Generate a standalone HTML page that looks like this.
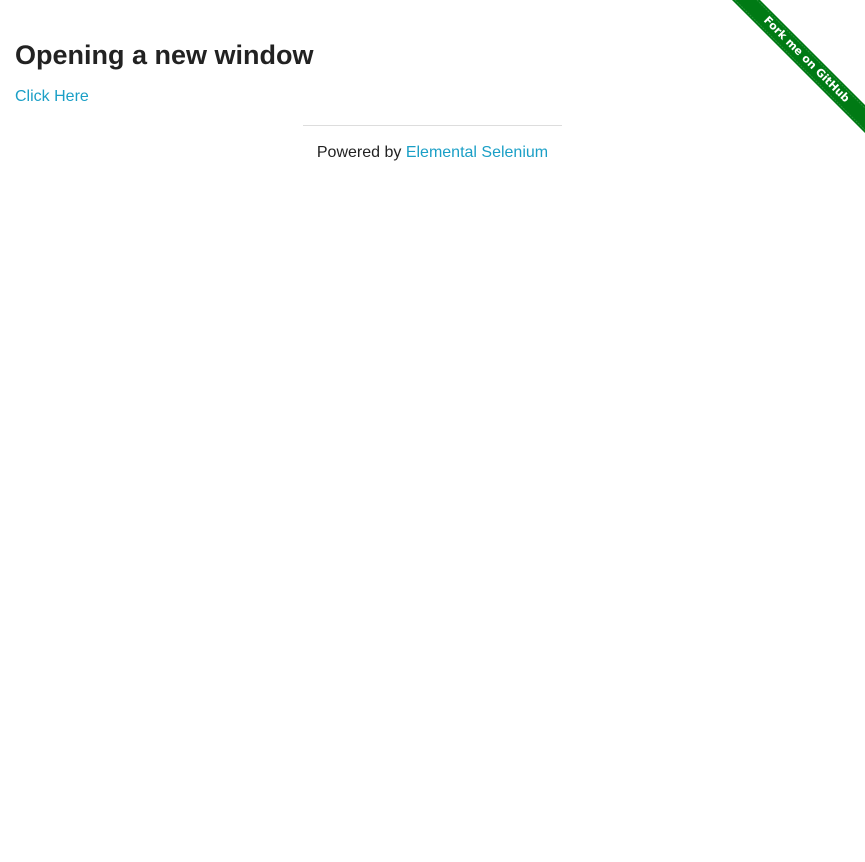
<!DOCTYPE html>
<html><head><meta charset="utf-8">
<style>
html,body{margin:0;padding:0;background:#fff;}
body{font-family:"Liberation Sans",Arial,sans-serif;color:#222;width:865px;height:862px;position:relative;overflow:hidden;}
h3{position:absolute;left:15px;top:38px;margin:0;font-size:27px;font-weight:bold;color:#222;line-height:34px;}
.link{position:absolute;left:15px;top:87px;font-size:16px;color:#1a9fc6;text-decoration:none;line-height:20px;}
hr{position:absolute;left:303px;top:125px;width:259px;margin:0;border:0;border-top:1px solid #ddd;}
.foot{position:absolute;left:0;width:865px;top:143px;text-align:center;font-size:16px;line-height:20px;}
.foot a{color:#1a9fc6;text-decoration:none;}
svg{position:absolute;left:0;top:0;}
</style></head><body>
<h3>Opening a new window</h3>
<a class="link" href="#">Click Here</a>
<hr>
<div class="foot">Powered by <a href="#">Elemental Selenium</a></div>
<svg width="865" height="862">
<polygon points="732,0 760,0 865,105 865,133" fill="#007a14"/>
<line x1="735" y1="0" x2="865" y2="130" stroke="#3a9a4a" stroke-width="1" stroke-dasharray="2,1" opacity="0.7"/>
<line x1="757" y1="0" x2="865" y2="108" stroke="#3a9a4a" stroke-width="1" stroke-dasharray="2,1" opacity="0.7"/>
<text x="807" y="63" transform="rotate(45 807 59)" text-anchor="middle" font-family="DejaVu Sans,sans-serif" font-weight="bold" font-size="11" fill="#fff">Fork me on GitHub</text>
</svg>
</body></html>
